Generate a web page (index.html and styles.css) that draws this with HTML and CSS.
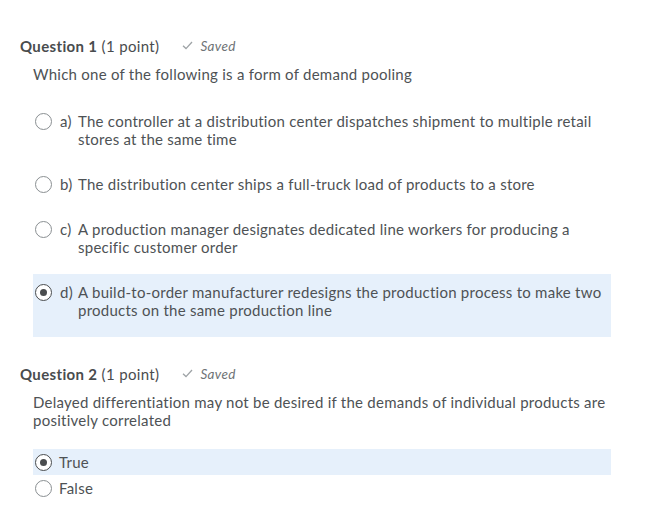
FILE: index.html
```html
<!DOCTYPE html>
<html>
<head>
<meta charset="utf-8">
<link rel="stylesheet" href="styles.css">
</head>
<body>
<div class="page">
  <section class="question">
    <div class="q-head">
      <span class="q-title"><b>Question 1</b> (1 point)</span>
      <span class="saved"><svg class="check" width="11" height="9" viewBox="0 0 11 9"><path d="M1 4.8 L4 7.6 L10 1" fill="none" stroke="#9ea3a6" stroke-width="1.3"/></svg><i>Saved</i></span>
    </div>
    <p class="q-text">Which one of the following is a form of demand pooling</p>
    <div class="options">
      <div class="opt"><span class="radio"></span><span class="letter">a)</span><span class="otext">The controller at a distribution center dispatches shipment to multiple retail stores at the same time</span></div>
      <div class="opt"><span class="radio"></span><span class="letter">b)</span><span class="otext">The distribution center ships a full-truck load of products to a store</span></div>
      <div class="opt"><span class="radio"></span><span class="letter">c)</span><span class="otext">A production manager designates dedicated line workers for producing a specific customer order</span></div>
      <div class="opt selected"><span class="radio on"></span><span class="letter">d)</span><span class="otext">A build-to-order manufacturer redesigns the production process to make two products on the same production line</span></div>
    </div>
  </section>
  <section class="question q2">
    <div class="q-head">
      <span class="q-title"><b>Question 2</b> (1 point)</span>
      <span class="saved"><svg class="check" width="11" height="9" viewBox="0 0 11 9"><path d="M1 4.8 L4 7.6 L10 1" fill="none" stroke="#9ea3a6" stroke-width="1.3"/></svg><i>Saved</i></span>
    </div>
    <p class="q-text">Delayed differentiation may not be desired if the demands of individual products are positively correlated</p>
    <div class="tf">
      <div class="tf-opt selected"><span class="radio on"></span><span class="otext">True</span></div>
      <div class="tf-opt"><span class="radio"></span><span class="otext">False</span></div>
    </div>
  </section>
</div>
</body>
</html>
```
FILE: styles.css
```css
* { box-sizing: border-box; }
body {
  margin: 0;
  background: #fff;
  font-family: Lato, "Open Sans", sans-serif;
  color: #4e5255;
  font-variant-ligatures: none;
}
.page {
  padding: 36px 0 0 20px;
  width: 611px;
}
.q-head {
  display: flex;
  align-items: center;
  height: 20px;
  font-size: 15px;
  line-height: 20px;
  letter-spacing: 0.35px;
}
.q-title { color: #494c4e; }
.q-title b { font-weight: 700; }
.saved {
  display: flex;
  align-items: center;
  margin-left: 23px;
  font-size: 13.5px;
  letter-spacing: 0.3px;
  color: #6e7376;
}
.check { margin-right: 7px; margin-top: -1px; }
.q-text {
  margin: 9px 0 0 13px;
  font-size: 15px;
  line-height: 18px;
  letter-spacing: 0.25px;
}
.options { margin-top: 20px; }
.opt {
  display: flex;
  align-items: flex-start;
  padding: 9px 6px 18px 15px;
  margin-left: 13px;
  font-size: 15px;
  line-height: 18px;
  letter-spacing: 0.25px;
}
.selected { background: #e6f0fb; }
.radio {
  flex: none;
  width: 17px;
  height: 17px;
  border: 1px solid #8a8f92;
  border-radius: 50%;
  background: #fff;
  margin-top: 0.5px;
  margin-left: -13px;
  position: relative;
}
.radio.on { border-color: #494c4e; }
.radio.on::after {
  content: "";
  position: absolute;
  left: 4px;
  top: 4px;
  width: 7px;
  height: 7px;
  border-radius: 50%;
  background: #494c4e;
}
.letter {
  flex: none;
  width: 18px;
  margin-left: 8px;
}
.otext { flex: 1; }
.q2 { margin-top: 27px; }
.tf { margin-top: 20px; margin-left: 13px; }
.tf-opt {
  display: flex;
  align-items: flex-start;
  padding: 4px 0 4px 15px;
  font-size: 15px;
  line-height: 18px;
  letter-spacing: 0.25px;
}
.tf-opt .otext { margin-left: 7px; }
```
